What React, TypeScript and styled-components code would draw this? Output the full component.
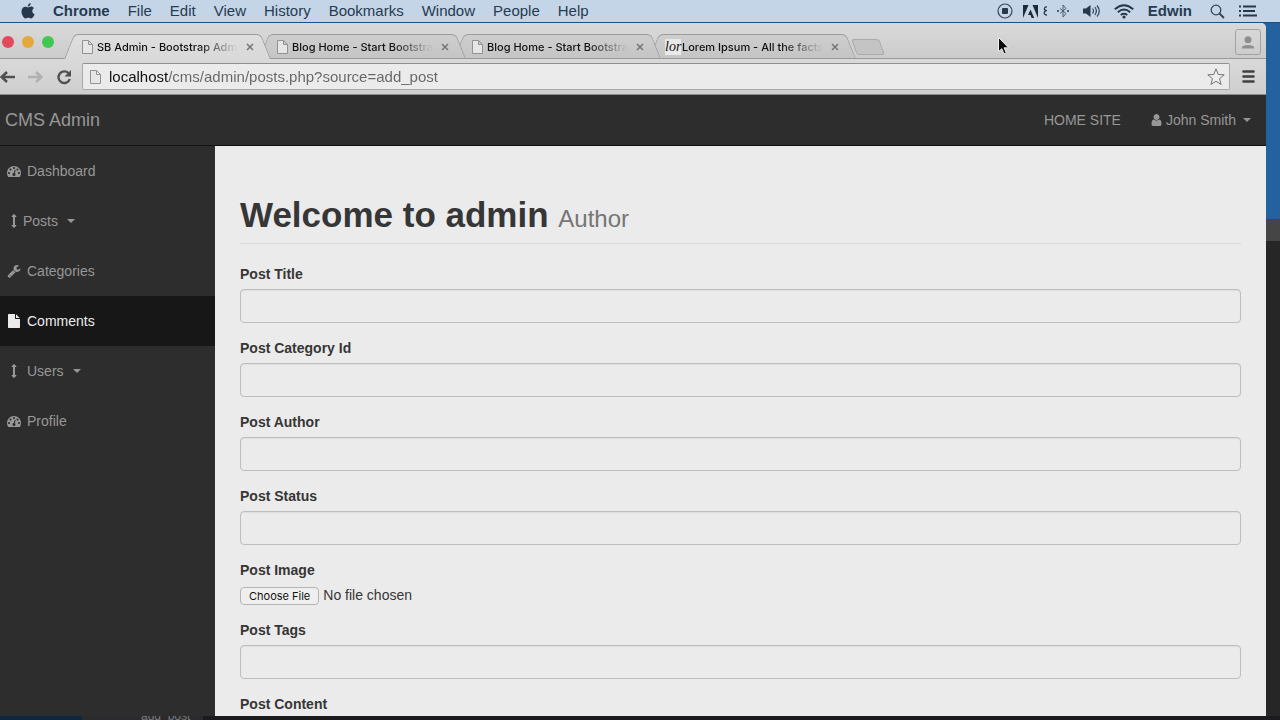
import React from "react";
import styled, { createGlobalStyle, css } from "styled-components";

const GlobalStyle = createGlobalStyle`
  *, *::before, *::after { box-sizing: border-box; }
  body {
    margin: 0;
    background: #262626;
    font-family: "Liberation Sans", Arial, sans-serif;
    font-size: 14px;
    line-height: 20px;
    color: #363636;
  }
  button, input, textarea { font: inherit; color: inherit; }
  button { margin: 0; padding: 0; border: 0; background: none; }
  svg { display: block; flex: none; }
`;

/* ---------- desktop ---------- */

const Desktop = styled.div`
  display: flex;
  flex-direction: column;
  height: 100vh;
  overflow: hidden;
`;

const MenuBar = styled.header`
  display: flex;
  align-items: center;
  justify-content: space-between;
  flex: none;
  height: 23px;
  padding: 0 23px 0 21px;
  background: #c3d5e6;
  border-bottom: 1px solid #1f5085;
  color: #273b52;
`;

const MenuList = styled.nav`
  display: flex;
  align-items: center;
  gap: 18px;
`;

const MenuButton = styled.button<{ $strong?: boolean }>`
  font-size: 15px;
  line-height: 22px;
  font-weight: ${(p) => (p.$strong ? 700 : 400)};
`;

const StatusGroup = styled.div<{ $gap: number }>`
  display: flex;
  align-items: center;
  gap: ${(p) => p.$gap}px;
`;

const StatusButton = styled.button`
  display: flex;
  align-items: center;
`;

const Middle = styled.div`
  display: flex;
  flex: 1;
  min-height: 0;
  padding-right: 14px;
  background: linear-gradient(#24619f 0 196px, #454545 196px 218px, #262626 218px);
`;

const DesktopFoot = styled.div`
  display: flex;
  flex: none;
  height: 4px;
  overflow: hidden;
  background: linear-gradient(90deg, #10263f 0 82px, #2b2b2d 82px 203px, #1b1a1d 203px);
  padding-left: 141px;
  color: #77777a;
  font-size: 12px;
  line-height: 0px;
`;

/* ---------- browser window ---------- */

const BrowserWindow = styled.div`
  display: flex;
  flex-direction: column;
  flex: 1;
  min-width: 0;
  overflow: hidden;
  border-radius: 0 5px 0 0;
  background: #d6d6d6;
`;

const TitleBar = styled.div`
  display: flex;
  align-items: flex-end;
  flex: none;
  height: 36px;
  padding-right: 5px;
  background: linear-gradient(#dadada, #cbcbcb);
  box-shadow: inset 0 -1px #999;
`;

const Lights = styled.div`
  display: flex;
  gap: 8px;
  width: 69px;
  padding: 0 0 11px 2px;
`;

const Light = styled.button<{ $color: string }>`
  width: 12px;
  height: 12px;
  border-radius: 50%;
  background: ${(p) => p.$color};
`;

const TabStrip = styled.div`
  display: flex;
  align-items: flex-end;
  flex: 1;
  isolation: isolate;
`;

const tabSide = css<{ $active?: boolean }>`
  content: "";
  position: absolute;
  z-index: -1;
  top: 0;
  bottom: 0;
  width: 55%;
  border-top: 1px solid #9b9b9b;
  background: ${(p) => (p.$active ? "linear-gradient(#dedede, #d9d9d9)" : "linear-gradient(#cecece, #c5c5c5)")};
`;

const Tab = styled.div<{ $active?: boolean; $order: number }>`
  position: relative;
  z-index: ${(p) => 10 - p.$order};
  display: flex;
  align-items: center;
  width: 197px;
  height: ${(p) => (p.$active ? 25 : 24)}px;
  margin: 0 -2px ${(p) => (p.$active ? 0 : 1)}px 0;
  padding: ${(p) => (p.$active ? 0 : 2)}px 8px 0 13px;

  &::before {
    ${tabSide}
    left: 0;
    border-left: 1px solid #9b9b9b;
    border-top-left-radius: 5px;
    transform: skewX(-22deg);
  }
  &::after {
    ${tabSide}
    right: 0;
    border-right: 1px solid #9b9b9b;
    border-top-right-radius: 5px;
    transform: skewX(22deg);
  }
`;

const TabTitle = styled.button`
  display: flex;
  align-items: center;
  flex: 1;
  gap: 4px;
  min-width: 0;
`;

const TabText = styled.span`
  flex: 1;
  white-space: nowrap;
  text-align: left;
  font-family: Inter, sans-serif;
  font-size: 11px;
  line-height: 16px;
  font-weight: 500;
  color: #111;
  mask-image: linear-gradient(90deg, #000 calc(100% - 44px), transparent calc(100% - 4px));
`;

const LoremIcon = styled.span`
  flex: none;
  width: 16px;
  height: 16px;
  margin: 0 -3px 0 -2px;
  background: #e9e9e9;
  color: #111;
  font-family: "Liberation Serif", serif;
  font-style: italic;
  font-size: 14px;
  line-height: 16px;
`;

const TabClose = styled.button`
  display: flex;
  padding: 4px;
`;

const NewTab = styled.button`
  width: 28px;
  height: 16px;
  margin: 0 0 4px 5px;
  border: 1px solid #aaa;
  border-radius: 3px;
  background: #c4c4c4;
  transform: skewX(20deg);
`;

const PersonButton = styled.button`
  display: flex;
  align-items: center;
  justify-content: center;
  width: 26px;
  height: 26px;
  margin-bottom: 4px;
  border: 1px solid #a2a2a2;
  border-radius: 3px;
`;

const Toolbar = styled.div`
  display: flex;
  align-items: center;
  flex: none;
  height: 36px;
  padding-right: 11px;
  background: linear-gradient(#d9d9d9, #cfcfcf);
  border-bottom: 1px solid #8c8c8c;
`;

const NavButtons = styled.div`
  display: flex;
  align-items: center;
  gap: 13px;
  width: 82px;
`;

const IconButton = styled.button`
  display: flex;
`;

const AddressBar = styled.label`
  display: flex;
  align-items: center;
  flex: 1;
  gap: 8px;
  height: 27px;
  margin-right: 12px;
  padding: 0 4px 0 7px;
  border: 1px solid #aaa;
  border-top-color: #8f8f8f;
  border-radius: 2px;
  background: #ebebeb;
`;

const AddressInput = styled.input`
  flex: 1;
  min-width: 0;
  padding: 0;
  border: 0;
  outline: 0;
  font-size: 15px;
  line-height: 20px;
  background: linear-gradient(90deg, #111 0 59px, #666 59px);
  background-clip: text;
  -webkit-text-fill-color: transparent;
`;

/* ---------- admin page ---------- */

const Page = styled.div`
  display: flex;
  flex-direction: column;
  flex: 1;
  min-height: 0;
  background: #2d2d2d;
`;

const NavBar = styled.header`
  display: flex;
  align-items: center;
  justify-content: space-between;
  flex: none;
  height: 51px;
  padding: 0 15px 0 5px;
  border-bottom: 1px solid #121212;
  color: #979797;
`;

const Brand = styled.a`
  color: inherit;
  font-size: 18px;
  text-decoration: none;
`;

const NavRight = styled.div`
  display: flex;
  align-items: center;
  gap: 30px;
`;

const NavLink = styled.a`
  color: inherit;
  text-decoration: none;
`;

const UserMenu = styled.button`
  display: flex;
  align-items: center;
  gap: 4px;
`;

const Caret = styled.span`
  margin-left: 3px;
  border: 4px solid transparent;
  border-top-color: currentColor;
  border-bottom-width: 0;
`;

const Columns = styled.div`
  display: flex;
  flex: 1;
  min-height: 0;
`;

const Sidebar = styled.nav`
  flex: none;
  width: 215px;
`;

const SideLink = styled.a<{ $active?: boolean }>`
  display: flex;
  align-items: center;
  height: 50px;
  padding-left: 7px;
  background: ${(p) => (p.$active ? "#171717" : "transparent")};
  color: ${(p) => (p.$active ? "#ebebeb" : "#979797")};
  text-decoration: none;

  ${Caret} {
    margin-left: 9px;
  }
`;

const SideIcon = styled.span<{ $tight?: boolean }>`
  margin-right: ${(p) => (p.$tight ? 2 : 6)}px;
`;

const Content = styled.main`
  flex: 1;
  min-width: 0;
  overflow: hidden;
  padding: 49px 25px 0;
  background: #ebebeb;
`;

const PageTitle = styled.h1`
  margin: 0 0 20px;
  padding-bottom: 8px;
  border-bottom: 1px solid #dadada;
  font-size: 35px;
  line-height: 40px;
  font-weight: 700;
`;

const Role = styled.small`
  font-size: 24px;
  line-height: 24px;
  font-weight: 400;
  color: #767676;
`;

const Field = styled.div`
  display: flex;
  flex-direction: column;
  align-items: stretch;
  gap: 5px;
  margin-bottom: 15px;
`;

const FieldLabel = styled.label`
  font-weight: 700;
`;

const box = css`
  width: 100%;
  padding: 6px 12px;
  border: 1px solid #bdbdbd;
  border-radius: 4px;
  outline: 0;
  background: #ebebeb;
  box-shadow: inset 0 1px 1px rgba(0, 0, 0, 0.06);
`;

const TextInput = styled.input`
  ${box}
  height: 34px;
`;

const TextArea = styled.textarea`
  ${box}
  height: 214px;
`;

const FileInput = styled.input`
  height: 20px;

  &::file-selector-button {
    height: 18px;
    margin: 2px 4px 0 0;
    padding: 0 8px;
    border: 1px solid #b4b4b4;
    border-radius: 4px;
    background: #efefef;
    color: #111;
    font-family: Inter, sans-serif;
    font-size: 11px;
    line-height: 16px;
  }
`;

/* ---------- icons ---------- */

const glyphs = {
  dashboard:
    "M384 1152q0-53-37.500-90.500t-90.500-37.500-90.500 37.500-37.500 90.500 37.500 90.500 90.500 37.500 90.500-37.500 37.500-90.500zm192-448q0-53-37.500-90.500t-90.500-37.500-90.500 37.500-37.500 90.500 37.500 90.500 90.500 37.500 90.500-37.500 37.500-90.500zm428 481l101-382q6-26-7.500-48.500t-38.500-29.500-48 6.500-30 39.500l-101 382q-60 5-107 43.500t-63 98.500q-20 77 20 146t117 89 146-20 89-117q16-60-6-117t-72-91zm660-33q0-53-37.500-90.500t-90.500-37.500-90.500 37.500-37.500 90.500 37.500 90.500 90.500 37.500 90.500-37.500 37.500-90.500zm-640-640q0-53-37.500-90.500t-90.500-37.500-90.500 37.500-37.500 90.500 37.500 90.500 90.500 37.500 90.500-37.500 37.500-90.500zm448 192q0-53-37.500-90.500t-90.500-37.500-90.500 37.500-37.500 90.500 37.500 90.500 90.500 37.500 90.500-37.500 37.500-90.500zm320 448q0 261-141 483-19 29-54 29h-1402q-35 0-54-29-141-221-141-483 0-182 71-348t191-286 286-191 348-71 348 71 286 191 191 286 71 348z",
  arrows:
    "M1216 320q0 26-19 45t-45 19h-128v1024h128q26 0 45 19t19 45-19 45l-256 256q-19 19-45 19t-45-19l-256-256q-19-19-19-45t19-45 45-19h128v-1024h-128q-26 0-45-19t-19-45 19-45l256-256q19-19 45-19t45 19l256 256q19 19 19 45z",
  wrench:
    "M448 1472q0-26-19-45t-45-19-45 19-19 45 19 45 45 19 45-19 19-45zm644-420l-682 682q-37 37-90 37-52 0-91-37l-106-108q-38-36-38-90 0-53 38-91l681-681q39 98 114.500 173.500t173.500 114.500zm634-435q0 39-23 106-47 134-164.500 217.500t-258.500 83.500q-185 0-316.500-131.500t-131.500-316.500 131.500-316.500 316.500-131.500q58 0 121.500 16.500t107.500 46.500q16 11 16 28t-16 28l-293 169v224l193 107q5-3 79-48.500t135.500-81 70.500-35.500q15 0 23.500 10t8.500 25z",
  file:
    "M1152 512v-472q22 14 36 28l408 408q14 14 28 36h-472zm-128 32q0 40 28 68t68 28h544v1056q0 40-28 68t-68 28h-1344q-40 0-68-28t-28-68v-1600q0-40 28-68t68-28h800v544z",
  user:
    "M1536 1399q0 109-62.500 187t-150.500 78h-854q-88 0-150.500-78t-62.500-187q0-85 8.500-160.500t31.500-152 58.500-131 94-89 134.500-34.500q131 128 313 128t313-128q76 0 134.500 34.500t94 89 58.500 131 31.500 152 8.500 160.500zm-256-887q0 159-112.500 271.500t-271.500 112.500-271.500-112.500-112.500-271.500 112.500-271.500 271.500-112.500 271.500 112.500 112.500 271.500z",
};

type GlyphName = keyof typeof glyphs;

const Glyph = ({ name }: { name: GlyphName }) => (
  <svg width="14" height="14" viewBox="0 0 1792 1792" fill="currentColor" aria-hidden="true">
    <path d={glyphs[name]} />
  </svg>
);

const UserGlyph = () => (
  <svg width="11" height="14" viewBox="192 0 1408 1792" fill="currentColor" aria-hidden="true">
    <path d={glyphs.user} />
  </svg>
);

const AppleIcon = () => (
  <svg width="14" height="16" viewBox="0 0 14 16" fill="#26384c" aria-hidden="true">
    <path d="M9.700 0C9.800 1.900 8.500 3.500 6.800 3.600 6.600 1.900 8 .3 9.700 0ZM7 4.400c.8 0 1.700-.8 3-.8 1.100 0 2.300.6 3 1.600-2.500 1.400-2.200 4.900.6 6-.6 1.700-2 4.200-3.500 4.200-1 0-1.600-.6-2.800-.6-1.200 0-1.900.6-2.800.6C2.800 15.400.500 11.700.500 8.500c0-3.100 1.900-4.800 3.800-4.800 1.200 0 2 .7 2.700.7Z" />
  </svg>
);

const RecordIcon = () => (
  <svg width="16" height="16" viewBox="0 0 16 16" aria-hidden="true">
    <circle cx="8" cy="8" r="7" fill="none" stroke="#34485e" strokeWidth="1.200" />
    <rect x="5" y="5" width="6" height="6" rx="1" fill="#26384c" />
  </svg>
);

const AdobeIcon = () => (
  <svg width="15" height="13" viewBox="0 0 15 13" fill="#1c2a3a" aria-hidden="true">
    <path d="M0 0h5.500L0 13ZM9.500 0H15v13ZM7.500 4.500 11.200 13H8.600L7.500 10H5Z" />
  </svg>
);

const CutIcon = () => (
  <svg width="4" height="10" viewBox="0 0 4 10" fill="none" stroke="#26384c" aria-hidden="true">
    <path d="M4 1C1 .5.500 4 3 4.500M4 4.700C.5 4.500 0 9 4 9" strokeWidth="1.300" />
  </svg>
);

const BluetoothIcon = () => (
  <svg width="12" height="14" viewBox="0 0 12 14" fill="none" stroke="#4c5e72" aria-hidden="true">
    <path d="M3 4.500l6 5L6 13V1l3 3.500-6 5" />
    <path d="M0 7h2M10 7h2" strokeWidth="2" />
  </svg>
);

const SpeakerIcon = () => (
  <svg width="17" height="14" viewBox="0 0 17 14" fill="none" stroke="#33475c" aria-hidden="true">
    <path d="M0 4.500h3L7.500 1v12L3 9.500H0Z" fill="#26384c" stroke="none" />
    <path d="M9.500 4.500q2 2.500 0 5M11.800 3q3.200 4 0 8M14 1.500q4.500 5.500 0 11" strokeWidth="1.200" />
  </svg>
);

const WifiIcon = () => (
  <svg width="20" height="15" viewBox="0 0 20 15" fill="none" stroke="#26384c" strokeWidth="1.900" aria-hidden="true">
    <path d="M.8 5.200Q10-2.800 19.200 5.200M3.800 8.200Q10 3 16.200 8.200M6.700 11Q10 8.500 13.300 11" />
    <circle cx="10" cy="13" r="1.600" fill="#26384c" stroke="none" />
  </svg>
);

const SearchIcon = () => (
  <svg width="15" height="15" viewBox="0 0 15 15" fill="none" stroke="#33475c" aria-hidden="true">
    <circle cx="6" cy="6" r="4.800" strokeWidth="1.300" />
    <path d="M9.500 9.500 14 14" strokeWidth="1.900" />
  </svg>
);

const ListIcon = () => (
  <svg width="18" height="12" viewBox="0 0 18 12" stroke="#26384c" strokeWidth="2" aria-hidden="true">
    <path d="M0 1.500h2M4 1.500h13M0 6h2M4 6h12M0 10.500h2M4 10.500h14" />
  </svg>
);

const PageIcon = () => (
  <svg width="11" height="14" viewBox="0 0 11 14" fill="#e6e6e6" stroke="#939393" aria-hidden="true">
    <path d="M.5.5h6l4 4v9H.5ZM6.500.5v4h4" />
  </svg>
);

const CloseIcon = () => (
  <svg width="8" height="8" viewBox="0 0 8 8" stroke="#757575" strokeWidth="1.500" aria-hidden="true">
    <path d="m1 1 6 6M7 1 1 7" />
  </svg>
);

const ArrowIcon = ({ color, flip }: { color: string; flip?: boolean }) => (
  <svg width="15" height="14" viewBox="0 0 15 14" fill="none" stroke={color} strokeWidth="2.600" aria-hidden="true">
    <path d={flip ? "M0 7h13M8 2l5.300 5L8 12" : "M15 7H2M7 2 1.700 7 7 12"} />
  </svg>
);

const ReloadIcon = () => (
  <svg width="16" height="16" viewBox="0 0 16 16" aria-hidden="true">
    <path d="M12.500 4.200A5.800 5.800 0 1 0 13.800 10" fill="none" stroke="#505050" strokeWidth="2.400" />
    <path d="M15 1v6.500H8.500Z" fill="#505050" />
  </svg>
);

const StarIcon = () => (
  <svg width="18" height="18" viewBox="0 0 18 18" fill="#efefef" stroke="#747474" strokeLinejoin="round" aria-hidden="true">
    <path d="m9 .8 2.200 5.700 6 .3-4.700 3.800 1.600 5.900L9 13.200l-5.100 3.300 1.600-5.900L.8 6.800l6-.3Z" />
  </svg>
);

const BarsIcon = () => (
  <svg width="13" height="13" viewBox="0 0 13 13" stroke="#404040" strokeWidth="2.600" strokeLinecap="round" aria-hidden="true">
    <path d="M1.500 1.500h10M1.500 6.500h10M1.500 11.500h10" />
  </svg>
);

const PersonIcon = () => (
  <svg width="12" height="13" viewBox="0 0 12 13" fill="#8f8f8f" aria-hidden="true">
    <circle cx="6" cy="3.800" r="3.500" />
    <path d="M0 12.500V11q1-2 6-2t6 2v1.500Z" />
  </svg>
);

const Pointer = styled.svg`
  position: absolute;
  top: 36px;
  left: 997px;
`;

/* ---------- data ---------- */

const menus = ["File", "Edit", "View", "History", "Bookmarks", "Window", "People", "Help"];

const tabs = [
  { title: "SB Admin - Bootstrap Adm" },
  { title: "Blog Home - Start Bootstra" },
  { title: "Blog Home - Start Bootstra" },
  { title: "Lorem Ipsum - All the facts", lorem: true },
];

const sideLinks: { text: string; icon: GlyphName; active?: boolean; tight?: boolean; caret?: boolean }[] = [
  { text: "Dashboard", icon: "dashboard" },
  { text: "Posts", icon: "arrows", tight: true, caret: true },
  { text: "Categories", icon: "wrench" },
  { text: "Comments", icon: "file", active: true },
  { text: "Users", icon: "arrows", caret: true },
  { text: "Profile", icon: "dashboard" },
];

const TextField = ({ id, label }: { id: string; label: string }) => (
  <Field>
    <FieldLabel htmlFor={id}>{label}</FieldLabel>
    <TextInput id={id} type="text" />
  </Field>
);

export default function App() {
  return (
    <Desktop>
      <GlobalStyle />
      <MenuBar>
        <MenuList>
          <StatusButton aria-label="Apple menu"><AppleIcon /></StatusButton>
          <MenuButton $strong>Chrome</MenuButton>
          {menus.map((m) => (
            <MenuButton key={m}>{m}</MenuButton>
          ))}
        </MenuList>
        <StatusGroup $gap={18}>
          <StatusGroup $gap={14}>
            <StatusGroup $gap={10}>
              <StatusButton aria-label="Recording"><RecordIcon /></StatusButton>
              <StatusGroup $gap={5}>
                <StatusButton aria-label="Adobe"><AdobeIcon /></StatusButton>
                <CutIcon />
              </StatusGroup>
              <StatusButton aria-label="Bluetooth"><BluetoothIcon /></StatusButton>
            </StatusGroup>
            <StatusButton aria-label="Volume"><SpeakerIcon /></StatusButton>
            <StatusButton aria-label="Wi-Fi"><WifiIcon /></StatusButton>
            <MenuButton $strong>Edwin</MenuButton>
          </StatusGroup>
          <StatusGroup $gap={14}>
            <StatusButton aria-label="Search"><SearchIcon /></StatusButton>
            <StatusButton aria-label="Notifications"><ListIcon /></StatusButton>
          </StatusGroup>
        </StatusGroup>
      </MenuBar>

      <Middle>
        <BrowserWindow>
          <TitleBar>
            <Lights>
              <Light $color="#e2495a" aria-label="Close window" />
              <Light $color="#e3a93b" aria-label="Minimize window" />
              <Light $color="#3fc950" aria-label="Zoom window" />
            </Lights>
            <TabStrip>
              {tabs.map((t, i) => (
                <Tab key={i} $active={i === 0} $order={i}>
                  <TabTitle>
                    {t.lorem ? <LoremIcon>lor</LoremIcon> : <PageIcon />}
                    <TabText>{t.title}</TabText>
                  </TabTitle>
                  <TabClose aria-label="Close tab"><CloseIcon /></TabClose>
                </Tab>
              ))}
              <NewTab aria-label="New tab" />
            </TabStrip>
            <PersonButton aria-label="Profile"><PersonIcon /></PersonButton>
          </TitleBar>

          <Toolbar>
            <NavButtons>
              <IconButton aria-label="Back"><ArrowIcon color="#505050" /></IconButton>
              <IconButton aria-label="Forward"><ArrowIcon color="#b0b0b0" flip /></IconButton>
              <IconButton aria-label="Reload"><ReloadIcon /></IconButton>
            </NavButtons>
            <AddressBar>
              <PageIcon />
              <AddressInput
                aria-label="Address"
                defaultValue="localhost/cms/admin/posts.php?source=add_post"
              />
              <IconButton aria-label="Bookmark this page"><StarIcon /></IconButton>
            </AddressBar>
            <IconButton aria-label="Browser menu"><BarsIcon /></IconButton>
          </Toolbar>

          <Page>
            <NavBar>
              <Brand href="#">CMS Admin</Brand>
              <NavRight>
                <NavLink href="#">HOME SITE</NavLink>
                <UserMenu>
                  <UserGlyph />
                  John Smith
                  <Caret />
                </UserMenu>
              </NavRight>
            </NavBar>
            <Columns>
              <Sidebar>
                {sideLinks.map((l) => (
                  <SideLink key={l.text} href="#" $active={l.active}>
                    <SideIcon $tight={l.tight}><Glyph name={l.icon} /></SideIcon>
                    {l.text}
                    {l.caret && <Caret />}
                  </SideLink>
                ))}
              </Sidebar>
              <Content>
                <PageTitle>
                  Welcome to admin <Role>Author</Role>
                </PageTitle>
                <form>
                  <TextField id="title" label="Post Title" />
                  <TextField id="category" label="Post Category Id" />
                  <TextField id="author" label="Post Author" />
                  <TextField id="status" label="Post Status" />
                  <Field>
                    <FieldLabel htmlFor="image">Post Image</FieldLabel>
                    <FileInput id="image" type="file" />
                  </Field>
                  <TextField id="tags" label="Post Tags" />
                  <Field>
                    <FieldLabel htmlFor="content">Post Content</FieldLabel>
                    <TextArea id="content" />
                  </Field>
                </form>
              </Content>
            </Columns>
          </Page>
        </BrowserWindow>
      </Middle>
      <DesktopFoot>add_post</DesktopFoot>

      <Pointer width="13" height="20" viewBox="0 0 13 20" aria-hidden="true">
        <path d="M1.500 1.500v14.200l3.300-3 2.200 5.200 2.300-1-2.200-5.100h4.500Z" fill="#0c0c0c" stroke="#eee" />
      </Pointer>
    </Desktop>
  );
}
